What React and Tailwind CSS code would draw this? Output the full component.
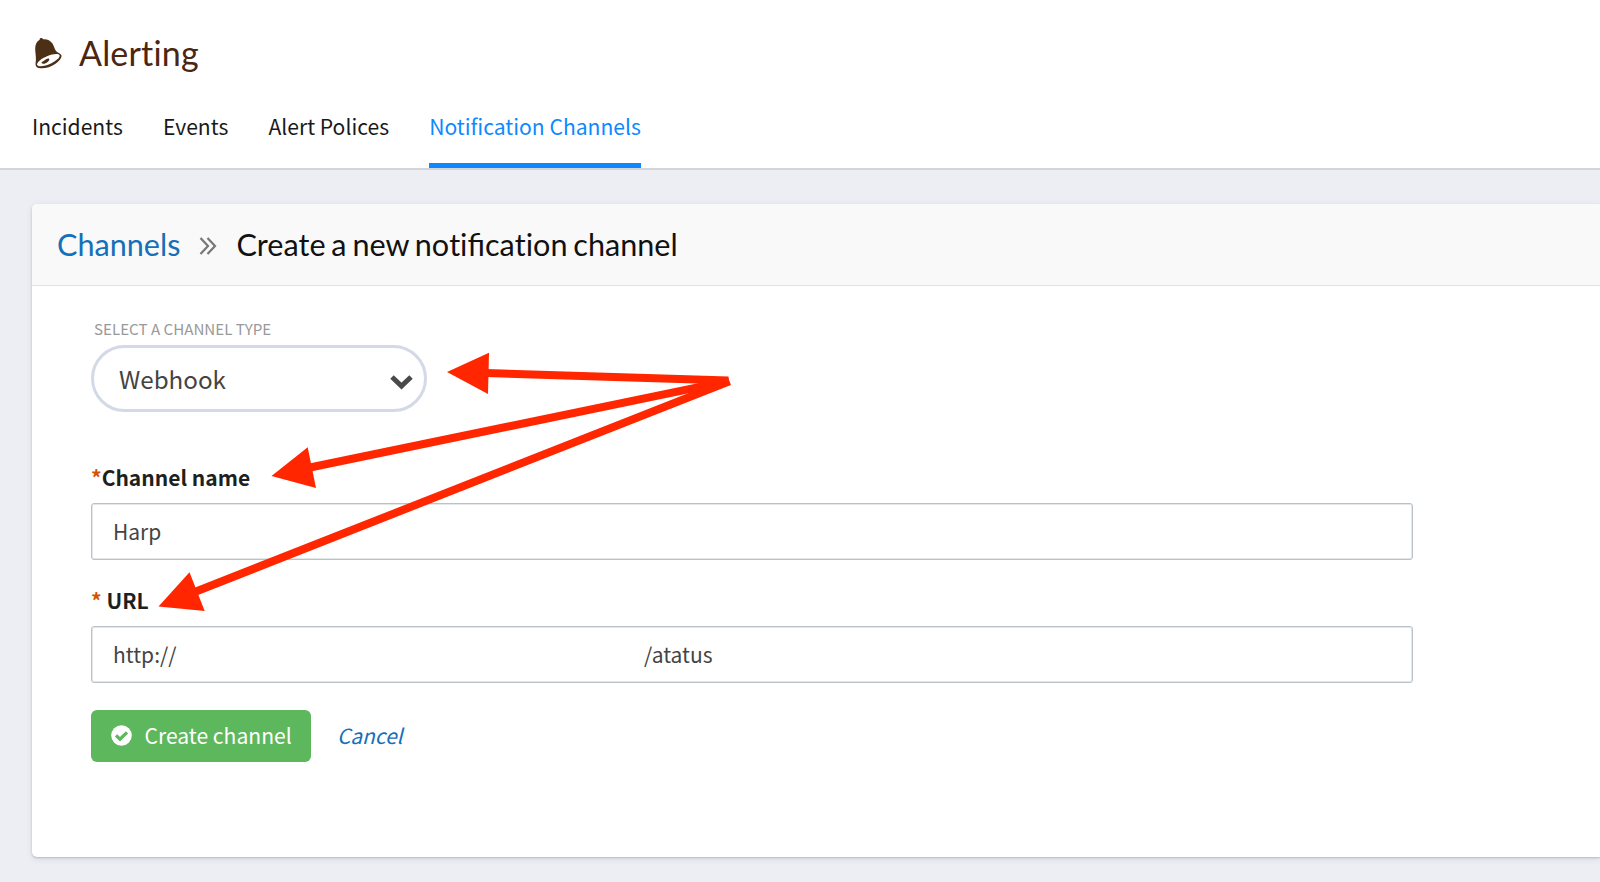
const tabs = ['Incidents', 'Events', 'Alert Polices', 'Notification Channels'];

function BellIcon() {
  return (
    <svg width="27" height="31" viewBox="0 0 27 31" className="mt-px block shrink-0">
      <path
        fill="#4c2f15"
        fillRule="evenodd"
        d="M5.8 0C4.8.1 4.6.8 4.7 1.7C1.6 3.6.2 6.400.2 10.500C.2 15.500 1.500 19.500.6 25C.3 27.500 1.200 29.300 3.600 30C9 31.200 15 29.200 20.500 25.700C24.500 23 27 19.600 26.500 17.500C26 15.700 23.700 15.300 22 14C19.500 12 19.500 9 17.500 5.500C15.200 2 11.500.8 8.300 1.200C7.600.3 7 0 5.800 0ZM2 26.500C2.500 23.500 6.500 20.500 12 18.200C17.500 15.900 23.700 15.200 24.600 17.300C25.300 19.300 21.500 22.700 16.500 25.200C10.500 28.200 2.500 29.700 2 26.500Z"
      />
      <path fill="#4c2f15" d="M6.500 24.600C7.500 23.200 9.300 23.200 11 21.300C12.500 20 14.500 20.200 14.300 21.400C14 23.500 11 25.500 8.500 25.700C7.200 25.800 6.300 25.300 6.500 24.600Z" />
    </svg>
  );
}

function Arrows() {
  return (
    <svg width="1600" height="882" viewBox="0 0 1600 882" className="pointer-events-none absolute left-0 top-0">
      <g stroke="#ff2600" strokeWidth="8" fill="none">
        <path d="M486 373L728.300 380.500" />
        <path d="M310 467.500L729 380.900" />
        <path d="M196 591.500L729.500 381.300" />
      </g>
      <g fill="#ff2600">
        <path d="M447 372L489 352.700L488 394Z" />
        <path d="M271.500 476L307.700 447.300L316 488Z" />
        <path d="M158.500 606.500L189.500 572.300L204.700 611Z" />
      </g>
    </svg>
  );
}

export default function App() {
  return (
    <div className="relative flex h-[882px] w-[1600px] flex-col overflow-hidden bg-[#edeef3] font-['Noto_Sans_CJK_SC',sans-serif] text-[#222]">
      <header className="h-[170px] shrink-0 border-b-2 border-[#d5d5d5] bg-white pl-8">
        <div className="flex h-[106px] items-center pl-[3px]">
          <BellIcon />
          <h1 className="ml-[17px] font-[Lato,sans-serif] text-[34px] leading-[40px] tracking-[0.200px] text-[#4c2610] [font-variant-ligatures:none]">Alerting</h1>
        </div>
        <nav className="flex h-[62px] gap-[40.200px] text-[21.100px] leading-[40px] text-[#191919]">
          {tabs.map((t, i) => (
            <a
              key={t}
              className={
                i === 3
                  ? 'h-[62px] whitespace-nowrap border-b-[5px] border-[#0d88ff] text-[#0d88ff]'
                  : 'h-[62px] whitespace-nowrap'
              }
            >
              {t}
            </a>
          ))}
        </nav>
      </header>

      <main className="ml-8 mt-[34px] h-[653px] shrink-0 rounded-l-[5px] bg-white shadow-[0_1px_2px_#b3bbcc,0_2px_6px_#d5d9e3]">
        <div className="flex h-[82px] items-center rounded-tl-[5px] border-b border-[#e2e2e2] bg-[#f9f9f9] pl-[25px] font-[Lato,sans-serif] text-[30.600px] leading-[40px]">
          <a className="text-[#1470b8]">Channels</a>
          <svg width="18" height="18" viewBox="0 0 18 18" className="ml-[19px] mr-[19px] mt-0.5" fill="none" stroke="#777" strokeWidth="2.200">
            <path d="M1.500 1L9 9L1.500 17M8.500 1L16 9L8.500 17" />
          </svg>
          <h2 className="text-[#111] [word-spacing:-2px]">
            Create a new no<span className="[font-variant-ligatures:none]">t</span>ifica<span className="[font-variant-ligatures:none]">t</span>ion channel
          </h2>
        </div>

        <form className="flex flex-col items-start pl-[59px] pt-[28px]">
          <label className="mb-[3px] pl-[3px] text-[15.150px] leading-[28px] text-[#999]">SELECT A CHANNEL TYPE</label>
          <div className="flex h-[67px] w-[336px] items-center justify-between rounded-full border-[3px] border-[#d3d9e7] pl-[25px] pr-[11px] text-[24.200px] text-[#444]">
            <span className="leading-[58px]">Webhook</span>
            <svg width="23" height="16" viewBox="0 0 23 16" className="mt-1.5" fill="none" stroke="#4a4a4d" strokeWidth="5">
              <path d="M2 3L11.500 12L21 3" />
            </svg>
          </div>

          <label className="mb-px mt-[49px] text-[21px] font-bold leading-[32px] text-[#1d1f20]">
            <span className="text-[#d35400]">*</span>Channel name
          </label>
          <div className="mt-[9px] h-[57px] w-[1322px] rounded-[3px] border border-[#b9c2c8] pl-[21px] text-[21px] leading-[54px] text-[#444] shadow-[inset_0_0_0_1px_#e3e7ea]">
            Harp
          </div>

          <label className="mb-px mt-6 text-[21px] font-bold leading-[32px] text-[#1d1f20]">
            <span className="text-[#d35400]">*</span> URL
          </label>
          <div className="mt-[9px] flex h-[57px] w-[1322px] rounded-[3px] border border-[#b9c2c8] pl-[21px] text-[21px] leading-[54px] text-[#444] shadow-[inset_0_0_0_1px_#e3e7ea]">
            <span className="w-[531px]">http://</span>
            <span>/atatus</span>
          </div>

          <div className="mt-[27px] flex items-center">
            <button type="button" className="flex h-[52px] w-[220px] items-center rounded-[6px] bg-[#5db75c] pb-px pl-5 text-[21.100px] leading-[50px] text-white">
              <svg width="21" height="21" viewBox="0 0 21 21" className="mr-[12.500px] shrink-0">
                <circle cx="10.500" cy="10.500" r="10.300" fill="#fff" />
                <path d="M5 10.300L9 14.200L16 7.400" fill="none" stroke="#5db75c" strokeWidth="3.200" />
              </svg>
              <span className="whitespace-nowrap pb-px leading-[48px]">Create channel</span>
            </button>
            <a className="ml-[26px] pb-0.5 text-[20.900px] italic leading-[50px] text-[#1470b8]">Cancel</a>
          </div>
        </form>
      </main>
      <Arrows />
    </div>
  );
}
